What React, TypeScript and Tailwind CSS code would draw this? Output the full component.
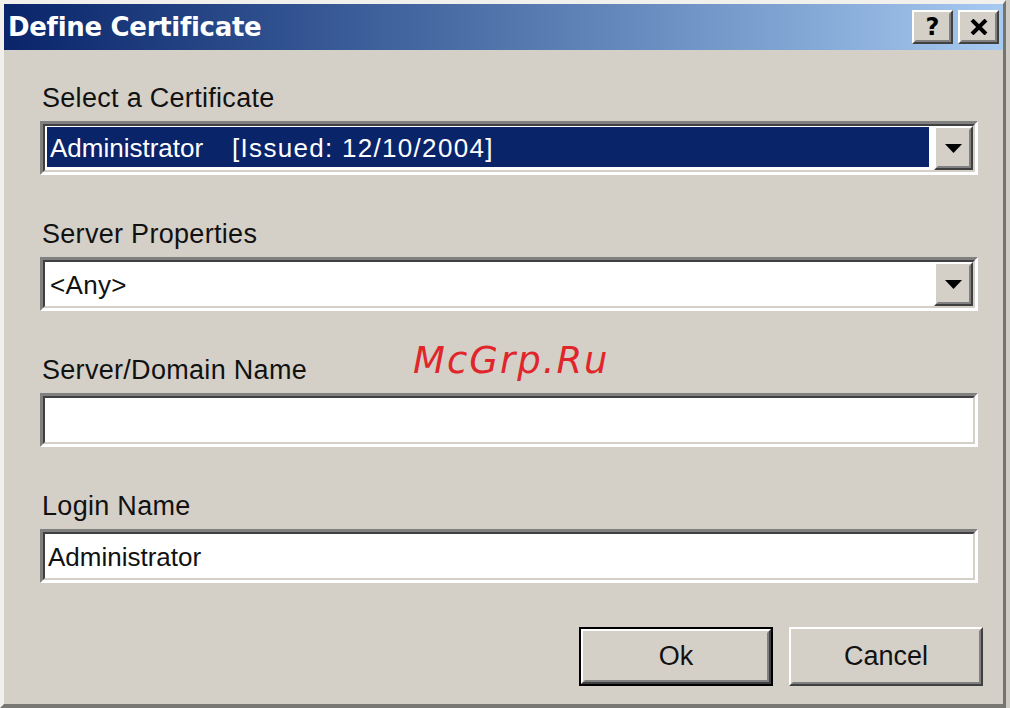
function Raised({ className, children }: { className?: string; children?: React.ReactNode }) {
  return (
    <div
      className={`border-2 border-t-white border-l-white border-r-[#404040] border-b-[#404040] bg-[#d4d0c8] ${className ?? ""}`}
    >
      <div className="flex h-full w-full items-center justify-center border-2 border-t-[#d4d0c8] border-l-[#d4d0c8] border-r-[#808080] border-b-[#808080]">
        {children}
      </div>
    </div>
  );
}

function DropButton() {
  return (
    <Raised className="h-full w-[39px] shrink-0">
      <svg width="17" height="9" viewBox="0 0 17 9">
        <path d="M0 0h17L8.5 9z" fill="#000" />
      </svg>
    </Raised>
  );
}

function Sunken({ children }: { children?: React.ReactNode }) {
  return (
    <div className="h-[54px] w-[938px] border-[3px] border-t-[#808080] border-l-[#808080] border-r-white border-b-white">
      <div className="flex h-full w-full border-2 border-t-[#404040] border-l-[#404040] border-r-[#d4d0c8] border-b-[#d4d0c8] bg-white">
        {children}
      </div>
    </div>
  );
}

function Field({ label, children }: { label: string; children?: React.ReactNode }) {
  return (
    <div className="flex flex-col">
      <div className="h-[30px] pl-[2px] text-[27px] leading-[30px] tracking-[0.3px] text-[#111]">{label}</div>
      <div className="mt-[8px]">
        <Sunken>{children}</Sunken>
      </div>
    </div>
  );
}

export default function App() {
  return (
    <div className="flex h-[708px] w-[1010px] bg-[#d4d0c8] font-['Liberation_Sans',Arial,sans-serif]">
      <div className="relative flex h-full flex-1 flex-col border-l-4 border-t-4 border-r-[3px] border-b-4 border-l-[#f1f0ec] border-t-[#f1f0ec] border-r-[#76746f] border-b-[#7a7874] bg-[#d4d0c8]">
        {/* title bar */}
        <div className="flex h-[46px] shrink-0 items-center justify-between bg-linear-to-r from-[#0a246a] to-[#a6caf0] pl-[4px] pr-[4px]">
          <span className="font-['DejaVu_Sans',sans-serif] text-[26px] font-bold tracking-[-0.3px] text-white">
            Define Certificate
          </span>
          <div className="flex gap-[5px]">
            <Raised className="h-[34px] w-[41px]">
              <span className="font-['DejaVu_Sans',sans-serif] text-[24px] font-bold leading-none text-black">?</span>
            </Raised>
            <Raised className="h-[34px] w-[41px]">
              <svg width="18" height="16" viewBox="0 0 18 16">
                <path d="M2 1l14 14M16 1L2 15" stroke="#000" strokeWidth="4" />
              </svg>
            </Raised>
          </div>
        </div>

        {/* form */}
        <div className="flex flex-col gap-[44px] pl-[36px] pt-[33px]">
          <Field label="Select a Certificate">
            <div className="flex h-full flex-1 gap-[5px] pl-[2px]">
              <div className="mt-[1px] flex h-[40px] flex-1 items-center bg-[#0a246a] pl-[3px] pt-[3px] text-[26px] whitespace-pre text-white">
                {"Administrator    "}
                <span className="tracking-[1.3px]">[Issued: 12/10/2004]</span>
              </div>
              <DropButton />
            </div>
          </Field>
          <Field label="Server Properties">
            <div className="flex h-full flex-1 gap-[5px] pl-[5px]">
              <div className="flex flex-1 items-center pt-[2px] text-[26px] tracking-[0.3px] text-[#111]">&lt;Any&gt;</div>
              <DropButton />
            </div>
          </Field>
          <Field label="Server/Domain Name" />
          <Field label="Login Name">
            <div className="flex flex-1 items-center pl-[3px] pt-[2px] text-[26px] text-[#111]">Administrator</div>
          </Field>
        </div>

        {/* buttons */}
        <div className="mt-[44px] flex w-[979px] justify-end gap-[16px]">
          <div className="h-[59px] w-[194px] border-2 border-black">
            <Raised className="h-full w-full">
              <span className="text-[27px] text-[#111]">Ok</span>
            </Raised>
          </div>
          <Raised className="h-[59px] w-[194px]">
            <span className="text-[27px] text-[#111]">Cancel</span>
          </Raised>
        </div>

        {/* watermark */}
        <div className="absolute left-[409px] top-[329px] font-['DejaVu_Sans',sans-serif] text-[37px] italic tracking-[2px] text-[#e0262b]">
          McGrp.Ru
        </div>
      </div>
      <div className="h-full w-[4px] bg-[#cfccc6]" />
    </div>
  );
}
